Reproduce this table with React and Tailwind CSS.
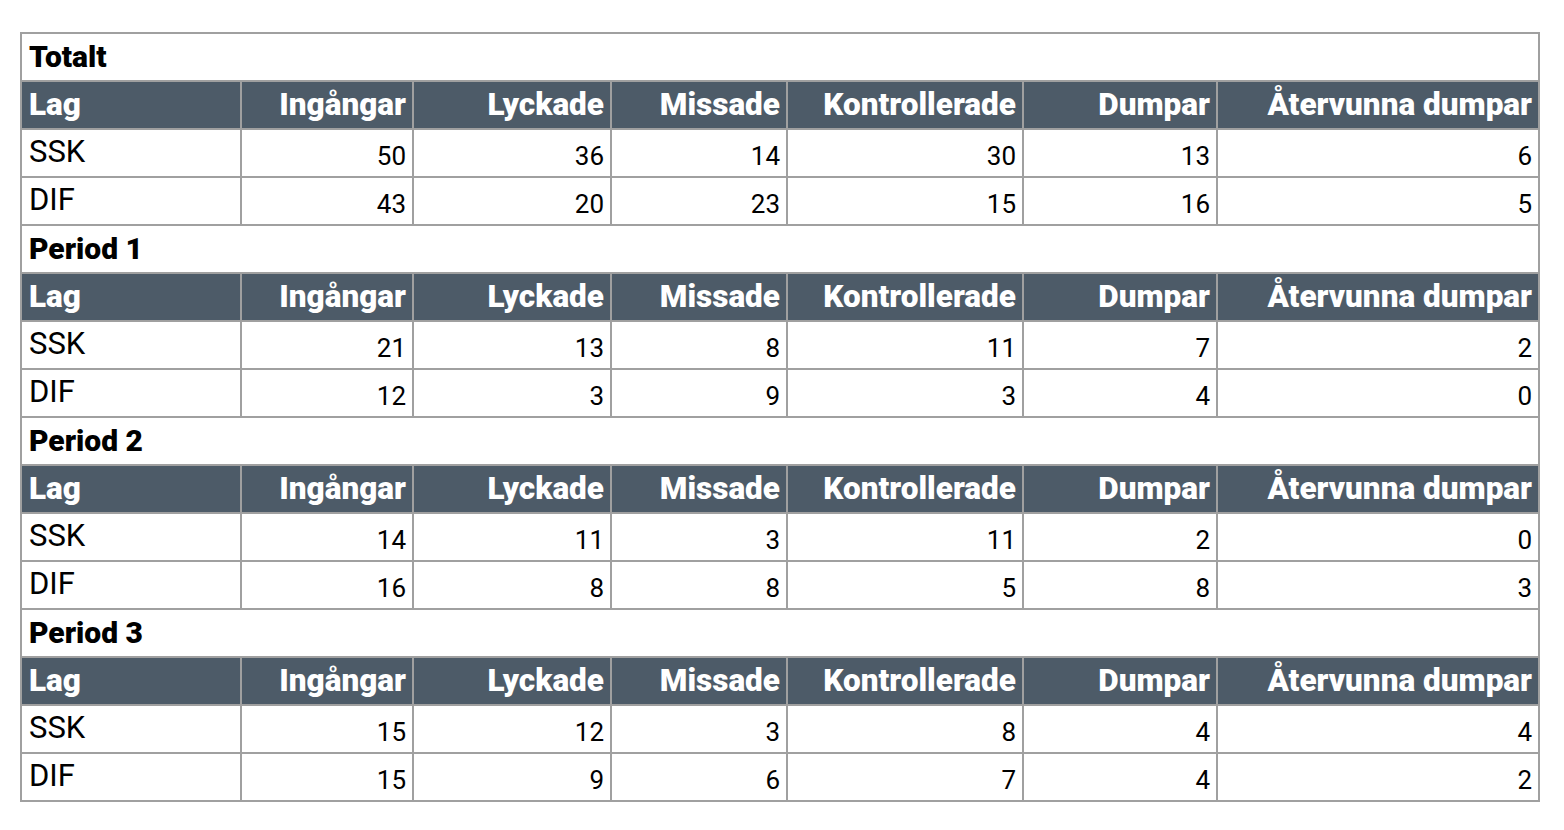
import React from 'react';

const cols = ['Ingångar', 'Lyckade', 'Missade', 'Kontrollerade', 'Dumpar', 'Återvunna dumpar'];

const sections = [
  { title: 'Totalt', rows: [['SSK', 50, 36, 14, 30, 13, 6], ['DIF', 43, 20, 23, 15, 16, 5]] },
  { title: 'Period 1', rows: [['SSK', 21, 13, 8, 11, 7, 2], ['DIF', 12, 3, 9, 3, 4, 0]] },
  { title: 'Period 2', rows: [['SSK', 14, 11, 3, 11, 2, 0], ['DIF', 16, 8, 8, 5, 8, 3]] },
  { title: 'Period 3', rows: [['SSK', 15, 12, 3, 8, 4, 4], ['DIF', 15, 9, 6, 7, 4, 2]] },
];

export default function App() {
  return (
    <div className="min-h-screen bg-white pl-[20px] pt-[32px] font-['Roboto',sans-serif] text-black">
      <table className="w-[1520px] table-fixed border-collapse border-2 border-[#a0a0a0]">
        <colgroup>
          <col className="w-[220px]" />
          <col className="w-[172px]" />
          <col className="w-[198px]" />
          <col className="w-[176px]" />
          <col className="w-[236px]" />
          <col className="w-[194px]" />
          <col className="w-[322px]" />
        </colgroup>
        <tbody>
          {sections.map((s) => (
            <React.Fragment key={s.title}>
              <tr className="h-[48px]">
                <td colSpan={7} className="border-2 border-[#a0a0a0] px-[7px] align-middle text-[30px] font-black leading-none">
                  {s.title}
                </td>
              </tr>
              <tr className="h-[48px] bg-[#4d5b68] text-white">
                <td className="border-2 border-[#a0a0a0] px-[7px] align-middle text-[31.5px] font-black leading-none">Lag</td>
                {cols.map((c) => (
                  <td key={c} className="border-2 border-[#a0a0a0] px-[6px] text-right align-middle text-[31.5px] font-black leading-none">
                    {c}
                  </td>
                ))}
              </tr>
              {s.rows.map((r) => (
                <tr key={r[0]} className="h-[48px]">
                  <td className="border-2 border-[#a0a0a0] px-[7px] pb-[4px] align-middle text-[31px] leading-none">{r[0]}</td>
                  {r.slice(1).map((v, i) => (
                    <td key={i} className="border-2 border-[#a0a0a0] px-[6px] pt-[6px] text-right align-middle text-[26px] leading-none">
                      {v}
                    </td>
                  ))}
                </tr>
              ))}
            </React.Fragment>
          ))}
        </tbody>
      </table>
    </div>
  );
}
